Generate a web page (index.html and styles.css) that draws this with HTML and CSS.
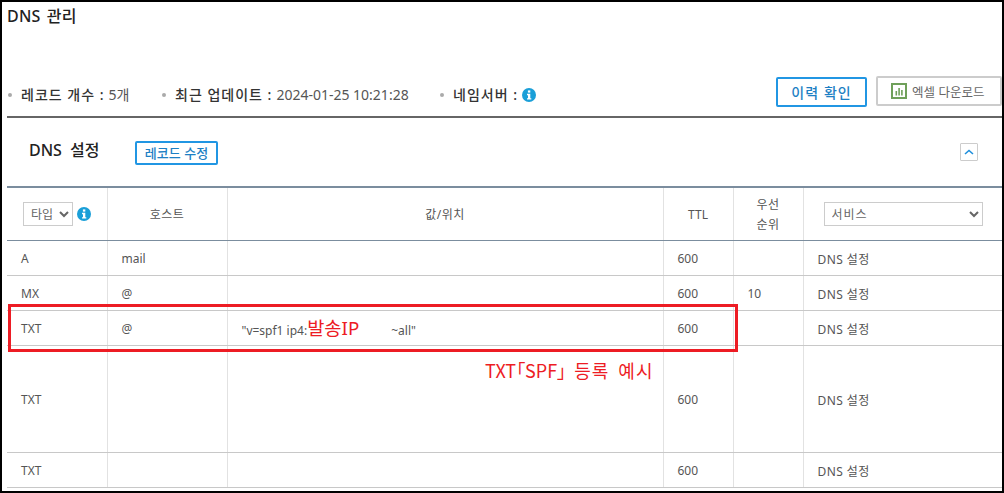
FILE: index.html
```html
<!DOCTYPE html>
<html lang="ko">
<head>
<meta charset="utf-8">
<title>DNS 관리</title>
<link rel="stylesheet" href="styles.css">
</head>
<body>
<div class="frame">
  <h1 class="page-title">DNS 관리</h1>
  <div class="summary">
    <ul class="stats">
      <li class="stat stat-a"><b>레코드 개수 :</b> 5개</li>
      <li class="stat stat-b"><b>최근 업데이트 :</b> 2024-01-25 10:21:28</li>
      <li class="stat"><b>네임서버 :</b>
        <svg class="info" viewBox="0 0 14 14"><circle cx="7" cy="7" r="7" fill="#1a9fd8"/><rect x="5.9" y="2.4" width="2.4" height="2.2" fill="#fff"/><path d="M5 5.8h3.3v4.4h1v1.4H5v-1.4h1V7.2H5z" fill="#fff"/></svg>
      </li>
    </ul>
    <div class="actions">
      <button class="btn-history">이력 확인</button>
      <button class="btn-excel">
        <svg class="xls" viewBox="0 0 16 16"><rect x="1" y="1" width="14" height="14" fill="#fff" stroke="#6fa05a" stroke-width="2"/><path d="M4.5 8h1.6v4.5H4.5zM7.3 5h1.6v7.5H7.3zM10.1 7h1.6v5.5h-1.6z" fill="#6fa05a"/></svg>
        엑셀 다운로드
      </button>
    </div>
  </div>
  <div class="section-head">
    <h2 class="section-title">DNS 설정</h2>
    <button class="btn-edit">레코드 수정</button>
    <button class="btn-collapse"><svg viewBox="0 0 10 6"><path d="M1 5l4-3.5L9 5" fill="none" stroke="#1e8fdc" stroke-width="1.6"/></svg></button>
  </div>
  <table class="records">
    <colgroup>
      <col class="c-type"><col class="c-host"><col class="c-val"><col class="c-ttl"><col class="c-pri"><col class="c-svc">
    </colgroup>
    <thead>
      <tr>
        <th class="type-head">
          <div class="type-filter">
            <select class="sel sel-type"><option>타입</option></select>
            <svg class="info" viewBox="0 0 14 14"><circle cx="7" cy="7" r="7" fill="#1a9fd8"/><rect x="5.9" y="2.4" width="2.4" height="2.2" fill="#fff"/><path d="M5 5.8h3.3v4.4h1v1.4H5v-1.4h1V7.2H5z" fill="#fff"/></svg>
          </div>
        </th>
        <th>호스트</th>
        <th>값/위치</th>
        <th class="ttl-head">TTL</th>
        <th>우선<br>순위</th>
        <th class="svc-head"><select class="sel sel-svc"><option>서비스</option></select></th>
      </tr>
    </thead>
    <tbody>
      <tr><td>A</td><td>mail</td><td></td><td>600</td><td></td><td>DNS 설정</td></tr>
      <tr><td>MX</td><td>@</td><td></td><td>600</td><td>10</td><td>DNS 설정</td></tr>
      <tr><td>TXT</td><td>@</td><td class="val">"v=spf1 ip4:<span class="ip">발송IP</span><span class="ip-gap"></span>~all"</td><td>600</td><td></td><td>DNS 설정</td></tr>
      <tr class="tall"><td>TXT</td><td></td><td></td><td>600</td><td></td><td>DNS 설정</td></tr>
      <tr><td>TXT</td><td></td><td></td><td>600</td><td></td><td>DNS 설정</td></tr>
    </tbody>
  </table>
  <div class="red-box"></div>
  <div class="red-note">TXT「SPF」<span class="note-ko">등록 예시</span></div>
</div>
</body>
</html>
```
FILE: styles.css
```css
* { box-sizing: border-box; }
html, body { margin: 0; padding: 0; background: #000; }
body { width: 1004px; height: 493px; overflow: hidden; font-family: "Noto Sans", "Noto Sans CJK KR", sans-serif; color: #444; }
.frame { position: relative; width: 1000px; height: 489px; margin: 2px 0 0 2px; padding-left: 5px; background: #fff; overflow: hidden; }
.page-title { margin: 0; padding-top: 3px; height: 72px; font-size: 16px; line-height: 22px; font-weight: 500; color: #222; word-spacing: 2px; letter-spacing: 0.2px; }
.summary { height: 44px; border-bottom: 2px solid #666; display: flex; justify-content: space-between; align-items: flex-start; }
.stats { list-style: none; margin: 0; padding: 11px 0 0; display: flex; font-size: 14px; line-height: 20px; color: #555; }
.stat { position: relative; padding-left: 14px; display: flex; align-items: center; gap: 4px; white-space: nowrap; }
.stat::before { content: ""; position: absolute; left: 1px; top: 8px; width: 4px; height: 4px; border-radius: 50%; background: #aaa; }
.stat-a { width: 154px; }
.stat-b { width: 278px; }
.stat b { font-weight: 500; color: #333; letter-spacing: 1px; }
.info { width: 14px; height: 14px; flex: none; }
.actions { display: flex; gap: 9px; padding-top: 3px; }
.btn-history { width: 91px; height: 30px; padding: 0; border: 2px solid #2196e3; border-radius: 2px; background: #fff; color: #1d7fc4; font: 500 14px "Noto Sans CJK KR", sans-serif; letter-spacing: 1px; }
.btn-excel { width: 126px; height: 30px; margin-top: -1px; padding: 0 0 0 13px; border: 2px solid #ccc; border-radius: 2px; background: #fff; color: #666; font: 400 12.5px "Noto Sans CJK KR", sans-serif; display: flex; align-items: center; gap: 5px; white-space: nowrap; }
.xls { width: 16px; height: 16px; flex: none; }
.section-head { position: relative; height: 70px; display: flex; align-items: center; padding: 1px 0 0 22px; border-bottom: 2px solid #7b8d9e; }
.section-title { margin: 0 0 8px; width: 106px; font-size: 16px; font-weight: 500; color: #222; word-spacing: 4px; }
.btn-edit { width: 83px; height: 24px; padding: 0; border: 2px solid #2196e3; border-radius: 2px; background: #fff; color: #1d7fc4; font: 500 13px "Noto Sans CJK KR", sans-serif; }
.btn-collapse { position: absolute; left: 953px; top: 25px; width: 18px; height: 18px; padding: 3px; border: 1px solid #ccc; border-radius: 1px; background: #fff; display: flex; align-items: center; justify-content: center; }
.btn-collapse svg { width: 10px; height: 6px; }
.records { width: 995px; table-layout: fixed; border-collapse: collapse; font-size: 12px; color: #555; }
.c-type { width: 100px; } .c-host { width: 120px; } .c-val { width: 436px; } .c-ttl { width: 70px; } .c-pri { width: 70px; } .c-svc { width: 199px; }
.records th { height: 52px; font-weight: 400; text-align: center; line-height: 20px; padding: 2px 0 0; letter-spacing: 0.5px; border-left: 1px solid #e2e2e2; border-bottom: 1px solid #7b8d9e; }
.records th.type-head, .records th.svc-head { padding: 0; }
.records th.ttl-head { letter-spacing: 0; }
.records th:first-child, .records td:first-child { border-left: 0; }
.records td { height: 35px; padding: 2px 0 0 14px; border-left: 1px solid #e2e2e2; border-bottom: 1px solid #c8c8c8; }
.records td:last-child { letter-spacing: 0.4px; }
.records tr.tall td { height: 107px; }
.records td.val { white-space: nowrap; }
.type-filter { display: flex; align-items: center; gap: 4px; padding-left: 16px; }
.sel { height: 24px; border: 1px solid #ccc; border-radius: 0; background: #fff; color: #666; font: 12px "Noto Sans CJK KR", sans-serif; padding: 0 0 0 3px; }
.sel-type { width: 50px; }
.sel-svc { width: 159px; display: block; margin-left: 20px; letter-spacing: 1px; }
.ip { color: #ed1c24; font-size: 18.7px; line-height: 17px; }
.ip-gap { display: inline-block; width: 32px; }
.red-box { position: absolute; left: 6px; top: 302px; width: 730px; height: 48px; border: 3px solid #ed1c24; }
.red-note { position: absolute; left: 483px; top: 355px; font: 400 18px/26px "Noto Sans CJK KR", sans-serif; font-feature-settings: "palt"; color: #ed1c24; white-space: nowrap; }
.note-ko { margin-left: 8px; letter-spacing: 1px; word-spacing: 3px; font-feature-settings: normal; }
```
